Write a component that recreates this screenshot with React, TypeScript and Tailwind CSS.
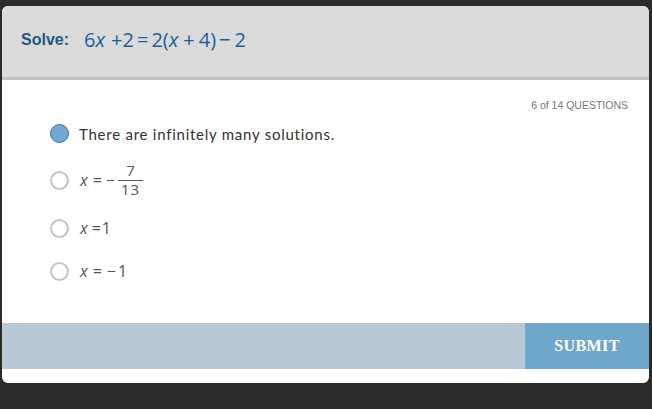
import React from "react";

function Radio({ checked }: { checked?: boolean }) {
  return checked ? (
    <div className="w-[19px] h-[19px] rounded-full bg-[#6fa8d2] border-[1.5px] border-[#41729a] shrink-0" />
  ) : (
    <div className="w-[19px] h-[19px] rounded-full bg-white border-2 border-[#c4c4c4] shrink-0" />
  );
}

const math = { fontFamily: "'Open Sans', sans-serif" };

export default function App() {
  return (
    <div className="w-[652px] h-[409px] bg-[#2b2b2b] pt-[6px] pl-[2px] overflow-hidden">
      <div className="w-[647px] h-[377px] bg-white rounded-[6px] overflow-hidden flex flex-col">
        <div className="h-[74px] bg-[#dadada] border-b-[3px] border-[#c2c2c2] flex items-center pl-[19px] pb-[3px]">
          <span className="text-[16px] font-bold text-[#24577f]" style={{ fontFamily: "'Liberation Sans', sans-serif" }}>
            Solve:
          </span>
          <span className="ml-[15px] text-[20px] text-[#1f5e99] flex items-baseline whitespace-pre" style={math}>
            <span>6</span>
            <i>x</i>
            <span className="ml-[6px]">+</span>
            <span>2</span>
            <span className="ml-[3px]">=</span>
            <span className="ml-[3px]">2(</span>
            <i>x</i>
            <span className="ml-[5px]">+</span>
            <span className="ml-[4px]">4)</span>
            <span className="ml-[3px]">−</span>
            <span className="ml-[4px]">2</span>
          </span>
        </div>
        <div className="h-[243px] relative">
          <div className="absolute right-[21px] top-[18px] text-[10.5px] text-[#777]" style={{ fontFamily: "'Liberation Sans', sans-serif" }}>
            6 of 14 QUESTIONS
          </div>
          <div className="pl-[48px] pt-[43px] flex flex-col" style={{ fontFamily: "'Lato', sans-serif" }}>
            <div className="h-[20px] flex items-center gap-[10px]">
              <Radio checked />
              <span className="text-[15px] text-[#333] tracking-[0.75px] pt-[2px]">There are infinitely many solutions.</span>
            </div>
            <div className="mt-[27px] h-[20px] flex items-center gap-[11px]">
              <Radio />
              <span className="text-[16px] flex items-center text-[#555]" style={math}>
                <i>x</i>
                <span className="ml-[5px]">=</span>
                <span className="ml-[4px]">−</span>
                <span className="inline-flex flex-col items-center ml-[3px] leading-none text-[15px]">
                  <span className="pb-[2px]">7</span>
                  <span className="border-t border-[#555] pt-[1px] px-[3px] tracking-[1px]">13</span>
                </span>
              </span>
            </div>
            <div className="mt-[28px] h-[20px] flex items-center gap-[11px]">
              <Radio />
              <span className="text-[16px] text-[#555] flex items-baseline" style={math}>
                <i>x</i>
                <span className="ml-[4px]">=</span>
                <span className="ml-[1px]">1</span>
              </span>
            </div>
            <div className="mt-[23px] h-[20px] flex items-center gap-[11px]">
              <Radio />
              <span className="text-[16px] text-[#555] flex items-baseline" style={math}>
                <i>x</i>
                <span className="ml-[5px]">=</span>
                <span className="ml-[5px]">−</span>
                <span className="ml-[2px]">1</span>
              </span>
            </div>
          </div>
        </div>
        <div className="h-[46px] bg-[#b9c9d6] flex justify-end">
          <div
            className="w-[124px] h-full bg-[#6fa7cc] flex items-center justify-center text-white font-bold text-[16px] tracking-[0.4px]"
            style={{ fontFamily: "'Liberation Serif', serif" }}
          >
            SUBMIT
          </div>
        </div>
      </div>
    </div>
  );
}
